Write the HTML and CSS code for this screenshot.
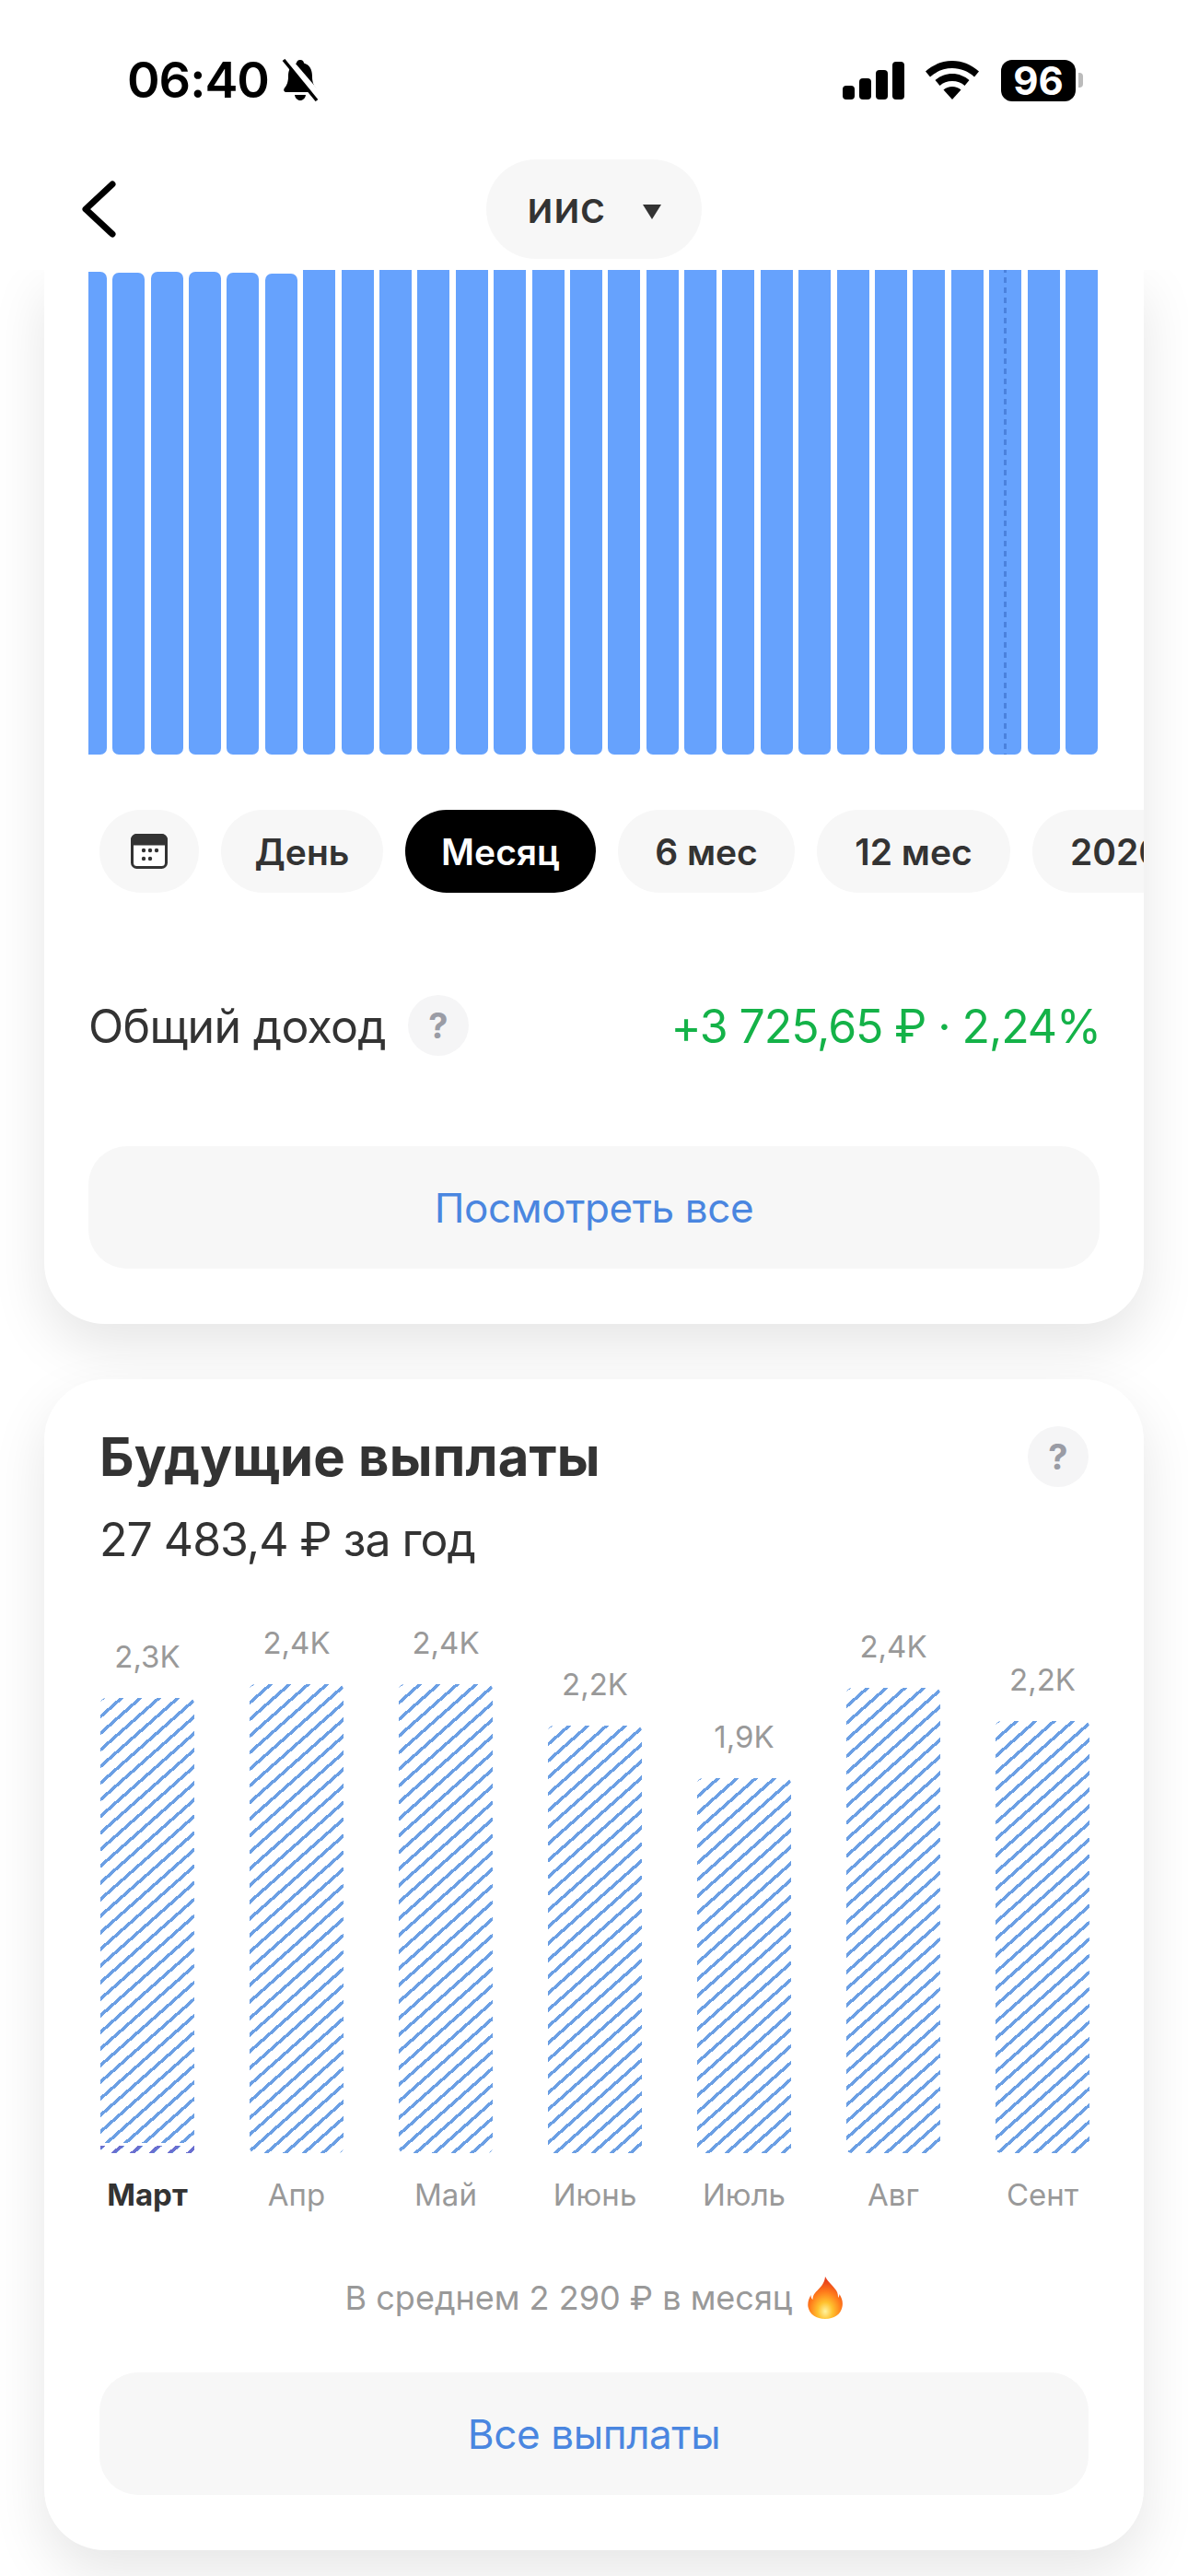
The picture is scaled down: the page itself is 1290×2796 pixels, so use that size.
FILE: index.html
```html
<!DOCTYPE html>
<html lang="ru">
	<head>
		<meta charset="utf-8">
		<title>ИИС</title>
		<link rel="stylesheet" href="styles.css">
	</head>
	<body>
		<div class="top">
			<div class="status">
				<div class="status-left">
					<span class="time">06:40</span>
					<svg class="bell" width="44" height="46" viewBox="0 0 44 46">
						<path d="M22 1c-2.500 0-4 1.700-4 3.600C11.500 6.500 9 12 9 19c0 6-1.500 9.500-4 12.500-1.500 1.800-1 4.500 2 4.500h30c3 0 3.500-2.700 2-4.500-2.500-3-4-6.500-4-12.500 0-7-2.500-12.500-9-14.400C26 2.700 24.500 1 22 1z" fill="#000"/>
						<path d="M16 39h12c-.5 3.500-3 6-6 6s-5.500-2.500-6-6z" fill="#000"/>
						<path d="M8 0l36 42" stroke="#fff" stroke-width="7"/>
						<path d="M4 1l36 44" stroke="#000" stroke-width="3.500"/>
					</svg>
				</div>
				<div class="status-right">
					<div class="signal">
						<i class="s1"></i><i class="s2"></i><i class="s3"></i><i class="s4"></i>
					</div>
					<svg class="wifi" width="58" height="42" viewBox="0 0 58 42">
						<path d="M29 0C18 0 8 4.300 0 11.500l5 6C11.500 11.500 20 8 29 8s17.500 3.500 24 9.500l5-6C50 4.300 40 0 29 0z" fill="#000"/>
						<path d="M29 14c-7 0-13.500 2.700-18.500 7l5 6c3.500-3.200 8.300-5 13.500-5s10 1.800 13.500 5l5-6c-5-4.300-11.500-7-18.500-7z" fill="#000"/>
						<path d="M29 28c-3.700 0-7 1.300-9.500 3.500L29 42l9.500-10.500C36 29.300 32.700 28 29 28z" fill="#000"/>
					</svg>
					<div class="battery">96</div>
					<div class="battery-nub"></div>
				</div>
			</div>
			<div class="nav">
				<svg class="back" width="40" height="62" viewBox="0 0 40 62">
					<path d="M35 4L6 31l29 27" fill="none" stroke="#000" stroke-width="7" stroke-linecap="round" stroke-linejoin="round"/>
				</svg>
				<div class="account">
					<span class="account-name">иис</span>
					<svg class="account-arrow" width="22" height="17" viewBox="0 0 22 17"><path d="M1 1h20L11 17z" fill="#333"/></svg>
				</div>
			</div>
		</div>

		<div class="content">
			<div class="card card-first">
				<div class="bars">
					<div class="bar" style="height:524px"></div>
					<div class="bar" style="height:523px"></div>
					<div class="bar" style="height:524px"></div>
					<div class="bar" style="height:524px"></div>
					<div class="bar" style="height:523px"></div>
					<div class="bar" style="height:522px"></div>
					<div class="bar"></div>
					<div class="bar"></div>
					<div class="bar"></div>
					<div class="bar"></div>
					<div class="bar"></div>
					<div class="bar"></div>
					<div class="bar"></div>
					<div class="bar"></div>
					<div class="bar"></div>
					<div class="bar"></div>
					<div class="bar"></div>
					<div class="bar"></div>
					<div class="bar"></div>
					<div class="bar"></div>
					<div class="bar"></div>
					<div class="bar"></div>
					<div class="bar"></div>
					<div class="bar"></div>
					<div class="bar bar-today"><div class="dash"></div></div>
					<div class="bar"></div>
					<div class="bar"></div>
				</div>

				<div class="periods">
					<div class="pill pill-icon">
						<svg width="40" height="38" viewBox="0 0 40 38">
							<rect x="1.500" y="1.500" width="37" height="35" rx="5" fill="#fff" stroke="#333" stroke-width="3"/>
							<path d="M1.500 11V6.500a5 5 0 0 1 5-5h27a5 5 0 0 1 5 5V11z" fill="#333" stroke="#333" stroke-width="3"/>
							<g fill="#333">
								<circle cx="14" cy="18" r="2.200"/><circle cx="21" cy="18" r="2.200"/><circle cx="28" cy="18" r="2.200"/>
								<circle cx="14" cy="27" r="2.200"/><circle cx="21" cy="27" r="2.200"/>
							</g>
						</svg>
					</div>
					<div class="pill pill-day">День</div>
					<div class="pill pill-active">Месяц</div>
					<div class="pill pill-six">6 мес</div>
					<div class="pill pill-twelve">12 мес</div>
					<div class="pill pill-year">2020</div>
				</div>

				<div class="income">
					<span class="income-label">Общий доход</span>
					<div class="help">?</div>
					<span class="income-value">+3 725,65 ₽ · 2,24%</span>
				</div>

				<div class="more">Посмотреть все</div>
			</div>

			<div class="card card-second">
				<div class="head">
					<div class="title">Будущие выплаты</div>
					<div class="help">?</div>
				</div>
				<div class="sum">27 483,4 ₽ за год</div>

				<div class="payouts">
					<div class="col"><span>2,3K</span><div class="stripes" style="height:494px"><div class="stripes-now"></div></div></div>
					<div class="col"><span>2,4K</span><div class="stripes" style="height:509px"></div></div>
					<div class="col"><span>2,4K</span><div class="stripes" style="height:509px"></div></div>
					<div class="col"><span>2,2K</span><div class="stripes" style="height:464px"></div></div>
					<div class="col"><span>1,9K</span><div class="stripes" style="height:407px"></div></div>
					<div class="col"><span>2,4K</span><div class="stripes" style="height:505px"></div></div>
					<div class="col"><span>2,2K</span><div class="stripes" style="height:469px"></div></div>
				</div>
				<div class="months">
					<span class="month-now">Март</span>
					<span>Апр</span>
					<span>Май</span>
					<span>Июнь</span>
					<span>Июль</span>
					<span>Авг</span>
					<span>Сент</span>
				</div>

				<div class="average">
					<span>В среднем 2 290 ₽ в месяц</span>
					<svg width="38" height="46" viewBox="0 0 38 46">
						<defs>
							<radialGradient id="flame" cx="50%" cy="82%" r="72%">
								<stop offset="0" stop-color="#fff3a0"/>
								<stop offset=".3" stop-color="#ffc12e"/>
								<stop offset=".65" stop-color="#ff7a1a"/>
								<stop offset="1" stop-color="#e8401c"/>
							</radialGradient>
						</defs>
						<path d="M19 0c3 6 8 9 12 15 2 3 2 6 2 8 1-1 1.500-3 1.500-4 3 5 4 9 3 14-1.500 8-9 13-18.500 13S2 41 .5 33c-.8-5 .8-9 3-13 0 2 .5 4 2 5 0-5 3-8 6-11 4-4 7-8 7.500-14z" fill="url(#flame)"/>
					</svg>
				</div>

				<div class="more">Все выплаты</div>
			</div>
		</div>
	</body>
</html>
```
FILE: styles.css
```css
html, body {
	margin: 0;
	padding: 0;
}
body {
	width: 1290px;
	height: 2796px;
	overflow: hidden;
	background-color: #fff;
	font-family: "Inter", "Noto Sans", sans-serif;
	color: #333;
}

/* status bar and nav */
.top {
	position: relative;
	z-index: 1;
	height: 293px;
	background-color: #fff;
}
.status {
	height: 173px;
	box-sizing: border-box;
	padding: 62px 114px 0 138px;
	display: flex;
	justify-content: space-between;
	align-items: flex-start;
}
.status-left {
	display: flex;
	align-items: center;
	gap: 12px;
}
.time {
	font-size: 54px;
	line-height: 50px;
	font-weight: 600;
	color: #000;
	letter-spacing: -1px;
}
.status-right {
	display: flex;
	align-items: center;
	height: 50px;
}
.signal {
	display: flex;
	align-items: flex-end;
	gap: 5px;
	height: 41px;
	margin-right: 23px;
}
.signal i {
	display: block;
	width: 13px;
	background-color: #000;
	border-radius: 4px;
}
.signal .s1 { height: 15px; }
.signal .s2 { height: 23px; }
.signal .s3 { height: 32px; }
.signal .s4 { height: 41px; }
.wifi {
	margin-right: 24px;
}
.battery {
	width: 81px;
	height: 45px;
	background-color: #000;
	color: #fff;
	border-radius: 12px;
	font-size: 42px;
	font-weight: 700;
	line-height: 45px;
	text-align: center;
}
.battery-nub {
	width: 5px;
	height: 16px;
	margin-left: 3px;
	background-color: #bbb;
	border-radius: 0 4px 4px 0;
}
.nav {
	height: 108px;
	padding-left: 87px;
	padding-right: 528px;
	display: flex;
	justify-content: space-between;
	align-items: center;
}
.account {
	width: 234px;
	height: 108px;
	box-sizing: border-box;
	padding-left: 44px;
	border-radius: 54px;
	background-color: #f7f7f7;
	display: flex;
	align-items: center;
	gap: 40px;
	font-size: 48px;
	font-weight: 500;
}
.account-name {
	margin-bottom: 6px;
}
.account-arrow {
	margin-top: 4px;
}

/* cards */
.content {
	padding: 0 48px;
	display: flex;
	flex-direction: column;
	gap: 60px;
}
.card {
	background-color: #fff;
	border-radius: 66px;
	box-shadow: 0 24px 60px rgba(0, 0, 0, 0.1);
	overflow: hidden;
}
.card-first {
	padding: 0 48px 60px;
	border-radius: 0 0 66px 66px;
}
.card-second {
	padding: 51px 60px 60px;
}

/* top chart */
.bars {
	height: 526px;
	margin-right: 2px;
	overflow: hidden;
	display: flex;
	justify-content: flex-end;
	align-items: flex-end;
	gap: 6.4px;
}
.bar {
	flex: none;
	width: 35px;
	height: 540px;
	background-color: #66a2fd;
	border-radius: 7px;
}
.bar-today {
	display: flex;
	justify-content: center;
}
.dash {
	width: 3px;
	background: repeating-linear-gradient(180deg, #4b82dd 0, #4b82dd 6px, transparent 6px, transparent 11px);
}

/* period filter */
.periods {
	margin: 60px -48px 0 12px;
	display: flex;
	gap: 24px;
	overflow: hidden;
}
.pill {
	flex: none;
	height: 90px;
	border-radius: 45px;
	background-color: #f7f7f7;
	display: flex;
	align-items: center;
	justify-content: center;
	font-size: 39px;
	font-weight: 600;
}
.pill-icon { width: 108px; }
.pill-day { width: 176px; }
.pill-active {
	width: 207px;
	background-color: #000;
	color: #fff;
}
.pill-six { width: 192px; }
.pill-twelve { width: 210px; }
.pill-year { width: 182px; }

/* income row */
.income {
	margin-top: 111px;
	height: 66px;
	display: flex;
	align-items: center;
	font-size: 50px;
}
.income-label {
	margin-top: 2px;
	margin-right: 24px;
	letter-spacing: -0.7px;
}
.income-value {
	margin-top: 2px;
	margin-left: auto;
	margin-right: -1px;
	color: #14b248;
	letter-spacing: -1.1px;
}
.help {
	flex: none;
	width: 66px;
	height: 66px;
	border-radius: 33px;
	background-color: #f5f5f6;
	color: #9a9ca5;
	font-size: 38px;
	font-weight: 700;
	line-height: 66px;
	text-align: center;
}
.more {
	margin-top: 98px;
	height: 133px;
	border-radius: 42px;
	background-color: #f7f7f7;
	color: #4a86e0;
	font-size: 44px;
	letter-spacing: -0.4px;
	line-height: 134px;
	text-align: center;
}

/* future payouts */
.head {
	display: flex;
	justify-content: space-between;
	align-items: center;
	height: 66px;
}
.title {
	font-size: 58px;
	font-weight: 700;
	letter-spacing: 0.2px;
}
.sum {
	margin-top: 27px;
	font-size: 50px;
	letter-spacing: -1px;
	line-height: 60px;
}
.payouts, .months {
	display: grid;
	grid-template-columns: repeat(7, 102px);
	justify-content: space-between;
	margin-left: 1px;
	margin-right: -1px;
}
.payouts {
	margin-top: 62px;
	align-items: end;
}
.col {
	display: flex;
	flex-direction: column;
	align-items: center;
	gap: 25px;
	font-size: 33px;
	line-height: 40px;
	color: #999;
}
.stripes {
	width: 102px;
	border-radius: 6px;
	display: flex;
	flex-direction: column;
	justify-content: flex-end;
	background-image: repeating-linear-gradient(138.5deg, #6b9fe4 0, #6b9fe4 3.5px, transparent 3.5px, transparent 13.5px);
}
.stripes-now {
	height: 8px;
	border-top: 3px solid #fff;
	background-image: repeating-linear-gradient(138.5deg, #6a6fd0 0, #6a6fd0 3.5px, transparent 3.5px, transparent 13.5px);
}
.months {
	margin-top: 25px;
	font-size: 33px;
	line-height: 40px;
	color: #999;
	text-align: center;
}
.months span {
	white-space: nowrap;
	justify-self: center;
}
.month-now {
	color: #333;
	font-weight: 700;
}
.average {
	margin-top: 67px;
	height: 50px;
	display: flex;
	justify-content: center;
	align-items: center;
	gap: 17px;
	font-size: 36px;
	color: #999;
}
.card-second .more {
	margin-top: 56px;
}
```
